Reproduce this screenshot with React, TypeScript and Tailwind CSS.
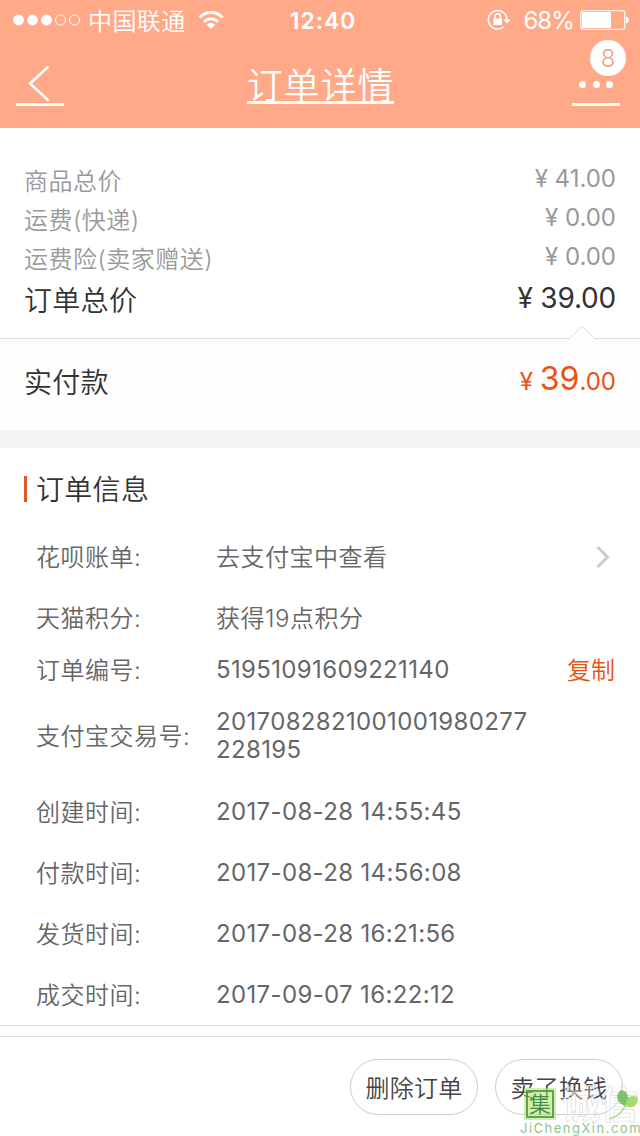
import { clsx } from "clsx";

const prices = [
  { label: "商品总价", value: "41.00" },
  { label: "运费(快递)", value: "0.00" },
  { label: "运费险(卖家赠送)", value: "0.00" },
];

const info = [
  { label: "花呗账单:", value: "去支付宝中查看", height: "h-[61px]", arrow: true },
  { label: "天猫积分:", value: "获得19点积分", height: "h-[61px]" },
  { label: "订单编号:", value: "51951091609221140", height: "h-[43px]", digits: true, copy: true },
  { label: "支付宝交易号:", value: "2017082821001001980277228195", height: "h-[90px]", digits: true },
  { label: "创建时间:", value: "2017-08-28 14:55:45", height: "h-[61px]", digits: true },
  { label: "付款时间:", value: "2017-08-28 14:56:08", height: "h-[61px]", digits: true },
  { label: "发货时间:", value: "2017-08-28 16:21:56", height: "h-[61px]", digits: true },
  { label: "成交时间:", value: "2017-09-07 16:22:12", height: "h-[61px]", digits: true },
];

function StatusBar() {
  return (
    <div className="grid h-10 grid-cols-[1fr_auto_1fr] items-center pl-[13px] pr-[11px]">
      <div className="flex items-center">
        <svg width="68" height="12" viewBox="0 0 68 12" fill="#fff" stroke="#fff">
          <circle cx="5.5" cy="6" r="5" />
          <circle cx="19.5" cy="6" r="5" />
          <circle cx="33.5" cy="6" r="5" />
          <circle cx="47.5" cy="6" r="5" fill="none" />
          <circle cx="61.5" cy="6" r="5" fill="none" />
        </svg>
        <span className="ml-[7px] pt-[3px] text-2xl tracking-[0.4px]">中国联通</span>
        <svg className="ml-3" width="26" height="20" viewBox="0 0 26 20" fill="none" stroke="#fff" strokeWidth="3">
          <path d="M1.5 7.5c6.5-6.6 16.5-6.6 23 0" />
          <path d="M6 12c4-4.2 10-4.2 14 0" />
          <path d="M13 19l-4.3-4.2c2.4-2.3 6.2-2.3 8.6 0z" fill="#fff" stroke="none" />
        </svg>
      </div>
      <span className="pt-0.5 pl-1 text-[23px] font-semibold tracking-[0.9px]">12:40</span>
      <div className="flex items-center justify-end">
        <svg width="24" height="22" viewBox="0 0 24 22" fill="none" stroke="#fff" strokeWidth="1.5">
          <path d="M16.8 17.8A9.3 9.3 0 1 1 20 11" />
          <path d="M16.5 10.5h7L20 14.5z" fill="#fff" stroke="none" />
          <rect x="6.5" y="9.5" width="8.5" height="6.5" rx="0.5" fill="#fff" stroke="none" />
          <path d="M8 10V7.5a2.7 2.7 0 0 1 5.4 0V10" />
        </svg>
        <span className="ml-3 pt-0.5 text-2xl font-normal tracking-[-0.9px]">68%</span>
        <svg className="ml-1.5" width="49" height="20" viewBox="0 0 49 20" fill="none" stroke="#fff">
          <rect x="0.75" y="0.75" width="44" height="18.5" rx="2.5" strokeWidth="1.2" />
          <rect x="2" y="2" width="29" height="16" rx="1.5" fill="#fff" stroke="none" />
          <path d="M46 6.5c4 1 4 6 0 7z" fill="#fff" stroke="none" />
        </svg>
      </div>
    </div>
  );
}

function Header() {
  return (
    <header className="h-32 bg-[#ffa988] text-white">
      <StatusBar />
      <div className="grid grid-cols-[1fr_auto_1fr] items-start pl-4 pr-5">
        <button className="flex h-[66px] w-12 items-end border-b-[3px] border-white pb-px">
          <svg width="48" height="36" viewBox="0 0 48 36" fill="none" stroke="#fff" strokeWidth="2.5">
            <path d="M32.5 0.5L14 17.5l18.5 17" />
          </svg>
        </button>
        <h1 className="mt-[23px] ml-[5px] h-[41px] border-b-[3px] border-white text-[36px] leading-[46px] tracking-[0.9px]">
          订单详情
        </h1>
        <button className="relative flex h-[66px] w-12 items-end justify-center justify-self-end border-b-[3px] border-white pb-[15px]">
          <span className="flex gap-[6.5px]">
            <i className="size-[7px] rounded-full bg-white" />
            <i className="size-[7px] rounded-full bg-white" />
            <i className="size-[7px] rounded-full bg-white" />
          </span>
          <span className="absolute top-0 left-[18px] flex size-9 items-center justify-center rounded-full bg-white pt-0.5 text-2xl text-[#f5a385]">
            8
          </span>
        </button>
      </div>
    </header>
  );
}

function Summary() {
  return (
    <section>
      <div className="h-[210px] px-6 pt-[33px]">
        {prices.map((p) => (
          <div key={p.label} className="flex h-[39px] items-center justify-between text-2xl text-[#999]">
            <span className="pt-0.5 tracking-[0.5px]">{p.label}</span>
            <span className="-mt-1 font-normal">¥ {p.value}</span>
          </div>
        ))}
        <div className="flex h-11 items-center justify-between text-[28px] text-[#333]">
          <span className="pt-0.5 tracking-[0.3px]">订单总价</span>
          <span className="-mt-1 font-normal tracking-[-0.2px]">¥ 39.00</span>
        </div>
      </div>
      <div className="relative flex h-[92px] items-center justify-between border-t border-[#ddd] bg-[#fdfdfd] px-6 pb-1.5">
        <svg className="absolute -top-3.5 right-11" width="28" height="15" viewBox="0 0 28 15">
          <path d="M1 14L14 1l13 13" fill="#fdfdfd" stroke="#ddd" />
        </svg>
        <span className="pt-0.5 text-[28px] tracking-[0.3px] text-[#333]">实付款</span>
        <span className="-mt-1 text-2xl font-normal text-[#e9530e]">
          ¥ <span className="text-[32px]">39</span>.00
        </span>
      </div>
    </section>
  );
}

function OrderInfo() {
  return (
    <section className="border-t-[18px] border-[#f3f3f3]">
      <div className="flex h-[78px] items-center px-6 pt-1">
        <span className="h-[26px] w-[3px] bg-[#dc5a23]" />
        <h2 className="ml-[9px] pt-0.5 text-[28px] tracking-[0.3px] text-[#333]">订单信息</h2>
      </div>
      {info.map((row) => (
        <div key={row.label} className={clsx("flex items-center pr-6 pl-9 text-2xl text-[#666]", row.height)}>
          <span className="w-[180px] shrink-0 pt-0.5 tracking-[0.5px]">{row.label}</span>
          <span
            className={clsx(
              "w-[320px] leading-7 break-all",
              row.digits ? "font-normal tracking-[0.35px]" : "pt-0.5 tracking-[0.5px]"
            )}
          >
            {row.value}
          </span>
          {row.arrow && (
            <svg className="ml-auto mr-1.5" width="14" height="24" viewBox="0 0 14 24" fill="none" stroke="#ccc" strokeWidth="3">
              <path d="M1.5 2l10 10-10 10" />
            </svg>
          )}
          {row.copy && <button className="ml-auto pt-0.5 pr-px whitespace-nowrap text-[#e9530e]">复制</button>}
        </div>
      ))}
    </section>
  );
}

function Watermark() {
  return (
    <div className="absolute right-0 bottom-0 h-[50px] w-[120px]">
      <div className="flex items-center gap-1.5 pt-0.5 pl-1">
        <span className="flex size-8 items-center justify-center bg-[#b5e86a]/60">
          <span className="flex size-[28px] items-center justify-center border-2 border-[#438b4b]/80 text-[22px] leading-none text-[#438b4b]">
            集
          </span>
        </span>
        <span className="text-[38px] leading-8 font-bold whitespace-nowrap text-white/30 [-webkit-text-stroke:0.7px_#ddd]">诚信</span>
      </div>
      <svg className="absolute top-1 right-0" width="32" height="32" viewBox="0 0 32 32">
        <path d="M17 16c-9-3-10-12-4-16 8 1 9 10 4 16z" fill="#66b957" fillOpacity="0.85" />
        <path d="M17 16c0-8 5-12 13-9 0 9-5 12-13 9z" fill="#9ad657" fillOpacity="0.85" />
        <path d="M17 16C14 23 9 27 1 29" fill="none" stroke="#acd98e" strokeWidth="1.5" />
      </svg>
      <div className="text-[13px] leading-4 font-normal tracking-[1.5px] whitespace-nowrap text-[#8bc48b]">JiChengXin.com</div>
    </div>
  );
}

export default function App() {
  return (
    <main className="relative h-[1136px] w-[640px] overflow-hidden bg-white font-[Inter,'Noto_Sans_CJK_SC',sans-serif] font-[350]">
      <Header />
      <Summary />
      <OrderInfo />
      <footer className="border-t border-[#ddd] pt-2.5">
        <div className="flex h-[101px] items-center justify-end gap-[17px] border-t border-[#ddd] pr-[17px]">
          <button className="h-14 w-32 rounded-full border border-[#ccc] pt-1 text-2xl tracking-[0.3px] text-[#444]">
            删除订单
          </button>
          <button className="h-14 w-32 rounded-full border border-[#ccc] pt-1 text-2xl tracking-[0.3px] text-[#444]">
            卖了换钱
          </button>
        </div>
      </footer>
      <Watermark />
    </main>
  );
}
